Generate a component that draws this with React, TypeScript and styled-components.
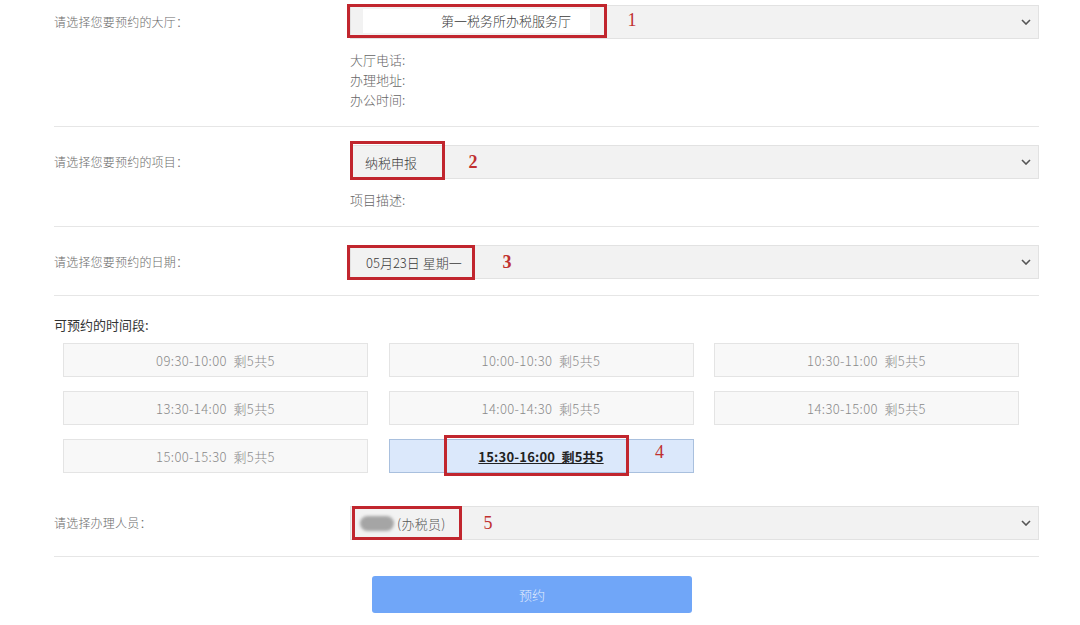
import React from 'react';
import styled, { createGlobalStyle } from 'styled-components';

const GlobalStyle = createGlobalStyle`
  body {
    margin: 0;
    background: #fff;
    font-family: "Noto Sans CJK SC", "Noto Sans", sans-serif;
    font-weight: 300;
  }
`;

const Form = styled.div`
  width: 985px;
  margin-left: 54px;
`;

const FieldRow = styled.div<{ $first?: boolean }>`
  display: grid;
  grid-template-columns: 296px 1fr;
  align-items: start;
  padding: ${(p) => (p.$first ? '5px' : '18px')} 0 16px;
  border-bottom: 1px solid #e6e6e6;
`;

const Label = styled.div`
  height: 34px;
  line-height: 34px;
  font-size: 12px;
  color: #6b6b6b;
  letter-spacing: 0.2px;
`;

const Field = styled.div`
  display: flex;
  flex-direction: column;
`;

const Select = styled.div<{ $pad?: number }>`
  position: relative;
  display: flex;
  align-items: center;
  height: 34px;
  box-sizing: border-box;
  padding-left: ${(p) => p.$pad ?? 14}px;
  background: #f2f2f2;
  border: 1px solid #e2e2e2;
  font-size: 13px;
  color: #3a3a3a;
`;

const Chevron = styled.svg`
  position: absolute;
  right: 7px;
  top: 50%;
  margin-top: -3px;
`;

const Info = styled.div`
  margin-top: 11px;
  font-size: 13px;
  line-height: 20px;
  color: #666;
`;

type MarkProps = { $left: number; $top: number; $w: number; $h: number };

const Mark = styled.div<MarkProps>`
  position: absolute;
  left: ${(p) => p.$left}px;
  top: ${(p) => p.$top}px;
  width: ${(p) => p.$w}px;
  height: ${(p) => p.$h}px;
  box-sizing: border-box;
  border: 3px solid #c1262e;
  display: flex;
  align-items: center;
  padding-left: 13px;
`;

const WhiteOut = styled.div`
  width: 227px;
  height: 24px;
  line-height: 24px;
  background: #fff;
  box-sizing: border-box;
  padding-left: 78px;
  font-size: 13px;
  color: #3a3a3a;
`;

const Num = styled.span<{ $x: number; $dy?: number; $bold?: boolean }>`
  position: absolute;
  left: ${(p) => p.$x}px;
  top: 50%;
  transform: translate(-50%, calc(-50% + ${(p) => p.$dy ?? 0}px));
  font-family: "Liberation Serif", serif;
  font-size: 18px;
  font-weight: ${(p) => (p.$bold ? 700 : 400)};
  color: #c0302f;
  line-height: 1;
`;

const Blurred = styled.span`
  display: inline-block;
  width: 34px;
  height: 15px;
  border-radius: 8px;
  background: #a5a5a5;
  filter: blur(1.5px);
  margin-right: 3px;
`;

const Staff = styled.span`
  color: #555;
  letter-spacing: 0.3px;
`;

const SlotSection = styled.div`
  padding: 20px 0 15px;
`;

const SlotTitle = styled.div`
  font-size: 13px;
  line-height: 18px;
  color: #333;
  font-weight: 400;
  margin-bottom: 9px;
`;

const SlotGrid = styled.div`
  display: grid;
  grid-template-columns: repeat(3, 305px);
  grid-auto-rows: 34px;
  column-gap: 20.5px;
  row-gap: 14px;
  padding-left: 9px;
`;

const Slot = styled.div<{ $active?: boolean }>`
  position: relative;
  display: flex;
  align-items: center;
  justify-content: center;
  box-sizing: border-box;
  background: ${(p) => (p.$active ? '#dbe8fb' : '#f8f8f8')};
  border: 1px solid ${(p) => (p.$active ? '#a9c0de' : '#e4e4e4')};
  font-size: 13px;
  letter-spacing: ${(p) => (p.$active ? '0.2px' : '0.4px')};
  color: ${(p) => (p.$active ? '#222' : '#8a8a8a')};
  font-weight: ${(p) => (p.$active ? 700 : 300)};
  text-decoration: ${(p) => (p.$active ? 'underline' : 'none')};
  white-space: pre;
`;

const ButtonBar = styled.div`
  padding: 19px 0 0 318px;
`;

const SubmitButton = styled.button`
  width: 320px;
  height: 37px;
  border: none;
  border-radius: 3px;
  background: #70a6f8;
  color: #e3edfd;
  font-family: inherit;
  font-weight: 300;
  font-size: 13px;
`;

const ChevronIcon = () => (
  <Chevron width="10" height="6" viewBox="0 0 10 6">
    <path d="M1 1 L5 5 L9 1" fill="none" stroke="#555" strokeWidth="1.6" />
  </Chevron>
);

const slots = [
  '09:30-10:00  剩5共5',
  '10:00-10:30  剩5共5',
  '10:30-11:00  剩5共5',
  '13:30-14:00  剩5共5',
  '14:00-14:30  剩5共5',
  '14:30-15:00  剩5共5',
  '15:00-15:30  剩5共5',
  '15:30-16:00  剩5共5',
];

export default function App() {
  return (
    <>
      <GlobalStyle />
      <Form>
        <FieldRow $first>
          <Label>请选择您要预约的大厅：</Label>
          <Field>
            <Select>
              <Mark $left={-4} $top={-2} $w={260} $h={34}>
                <WhiteOut>第一税务所办税服务厅</WhiteOut>
              </Mark>
              <Num $x={281} $dy={-2}>1</Num>
              <ChevronIcon />
            </Select>
            <Info>
              大厅电话:
              <br />
              办理地址:
              <br />
              办公时间:
            </Info>
          </Field>
        </FieldRow>

        <FieldRow>
          <Label>请选择您要预约的项目：</Label>
          <Field>
            <Select>
              纳税申报
              <Mark $left={-1} $top={-5} $w={95} $h={39} />
              <Num $x={122} $bold>2</Num>
              <ChevronIcon />
            </Select>
            <Info>项目描述:</Info>
          </Field>
        </FieldRow>

        <FieldRow>
          <Label>请选择您要预约的日期：</Label>
          <Field>
            <Select $pad={15}>
              05月23日 星期一
              <Mark $left={-4} $top={-1} $w={128} $h={35} />
              <Num $x={156} $bold>3</Num>
              <ChevronIcon />
            </Select>
          </Field>
        </FieldRow>

        <SlotSection>
          <SlotTitle>可预约的时间段:</SlotTitle>
          <SlotGrid>
            {slots.map((s, i) => {
              const active = i === slots.length - 1;
              return (
                <Slot key={s} $active={active}>
                  {s}
                  {active && (
                    <>
                      <Mark $left={54} $top={-5} $w={185} $h={41} />
                      <Num $x={270} $dy={-4}>4</Num>
                    </>
                  )}
                </Slot>
              );
            })}
          </SlotGrid>
        </SlotSection>

        <FieldRow>
          <Label>请选择办理人员：</Label>
          <Field>
            <Select $pad={9}>
              <Blurred />
              <Staff>(办税员)</Staff>
              <Mark $left={1} $top={-1} $w={110} $h={34} />
              <Num $x={137}>5</Num>
              <ChevronIcon />
            </Select>
          </Field>
        </FieldRow>

        <ButtonBar>
          <SubmitButton type="button">预约</SubmitButton>
        </ButtonBar>
      </Form>
    </>
  );
}
